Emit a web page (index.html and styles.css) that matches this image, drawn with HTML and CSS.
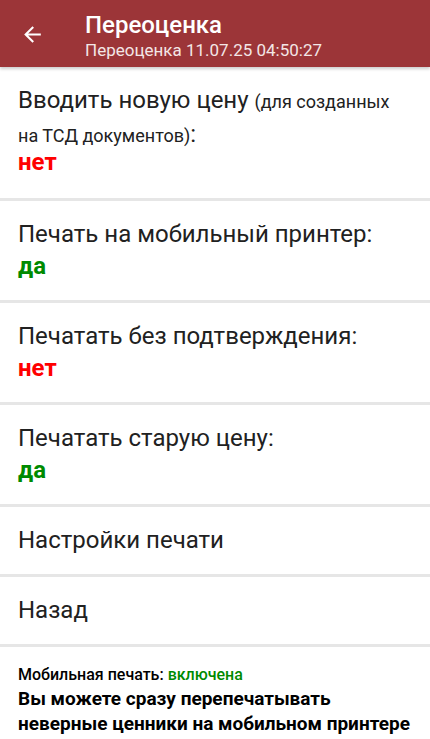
FILE: index.html
```html
<!DOCTYPE html>
<html lang="ru">
<head>
  <meta charset="UTF-8" />
  <meta name="viewport" content="width=device-width, initial-scale=1.0"/>
  <title>Переоценка</title>
  <link rel="stylesheet" href="styles.css">
</head>
<body>
  <div class="toolbar">
    <div class="back">
      <svg width="24" height="24" viewBox="0 0 24 24"><path d="M20 11H7.83l5.59-5.59L12 4l-8 8 8 8 1.41-1.41L7.83 13H20v-2z" fill="#fff"/></svg>
    </div>
    <div class="titles">
      <div class="title">Переоценка</div>
      <div class="subtitle">Переоценка 11.07.25 04:50:27</div>
    </div>
  </div>

  <div class="menu">
    <div class="item first">
      Вводить новую цену <span class="small">(для созданных на ТСД документов)</span>:
      <div class="no">нет</div>
    </div>
    <div class="item">
      Печать на мобильный принтер:
      <div class="yes">да</div>
    </div>
    <div class="item">
      Печатать без подтверждения:
      <div class="no">нет</div>
    </div>
    <div class="item">
      Печатать старую цену:
      <div class="yes">да</div>
    </div>
    <div class="item">Настройки печати</div>
    <div class="item">Назад</div>
  </div>

  <div class="footer">
    <div class="status">Мобильная печать: <span class="on">включена</span></div>
    <div class="hint">Вы можете сразу перепечатывать неверные ценники на мобильном принтере</div>
  </div>
</body>
</html>
```

FILE: styles.css
```css
body {
  font-family: Roboto, 'Noto Sans', sans-serif;
  background: #fff;
  color: #212121;
  margin: 0;
  padding: 0;
}
.toolbar {
  background: #9c3538;
  height: 67px;
  display: flex;
  align-items: center;
  box-shadow: 0 2px 3px rgba(0, 0, 0, 0.2);
  position: relative;
}
.back {
  width: 85px;
  display: flex;
  padding-left: 20px;
  box-sizing: border-box;
  padding-top: 1px;
}
.back svg {
  width: 25px;
  height: 25px;
}
.titles {
  color: #fff;
  padding-top: 4px;
}
.title {
  font-size: 24px;
  font-weight: 500;
  line-height: 28px;
}
.subtitle {
  font-size: 17px;
  line-height: 22px;
  color: #f3e6e6;
}
.item {
  padding: 17px 18px 18px;
  font-size: 24px;
  line-height: 32px;
  border-bottom: 3px solid #e6e6e6;
}
.item.first {
  padding-bottom: 20px;
}
.item.first .no {
  margin-top: -6px;
}
.small {
  font-size: 18px;
}
.no, .yes {
  font-weight: bold;
  font-size: 24px;
  line-height: 32px;
}
.no {
  color: #ff0000;
}
.yes {
  color: #008a00;
}
.footer {
  padding: 17px 10px 0 18px;
  color: #000;
  font-weight: bold;
}
.status {
  font-size: 16px;
  line-height: 22px;
  font-weight: 500;
}
.on {
  color: #008a00;
}
.hint {
  font-size: 19px;
  line-height: 25px;
}
```
